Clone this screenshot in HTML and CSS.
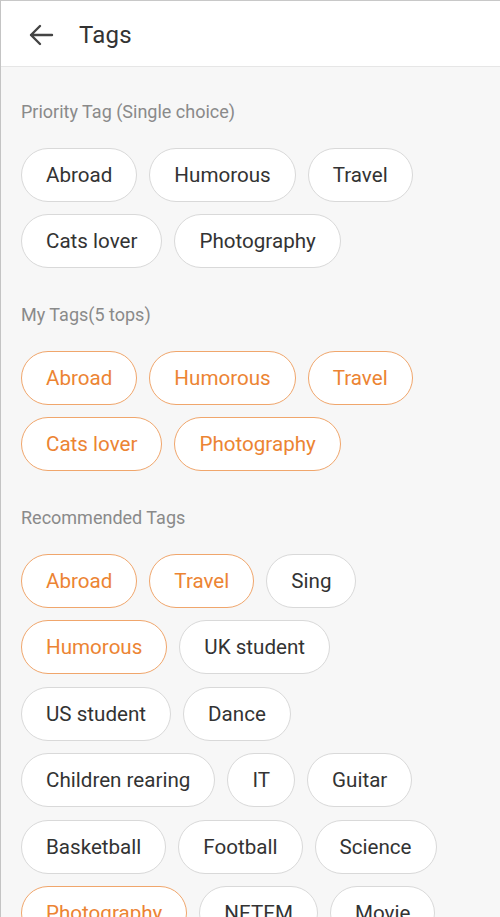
FILE: index.html
```html
<!DOCTYPE html>
<html>
<head>
<meta charset="utf-8">
<link rel="stylesheet" href="styles.css">
</head>
<body>
<div class="page">
  <header class="topbar">
    <svg class="back" width="26" height="22" viewBox="0 0 26 22"><path d="M24 11H3M12 2L3 11L12 20" fill="none" stroke="#444" stroke-width="2.4" stroke-linecap="round" stroke-linejoin="round"/></svg>
    <span class="title">Tags</span>
  </header>
  <main class="content">
    <section class="section">
      <div class="label">Priority Tag (Single choice)</div>
      <div class="chips">
        <span class="chip">Abroad</span>
        <span class="chip">Humorous</span>
        <span class="chip">Travel</span>
        <span class="chip">Cats lover</span>
        <span class="chip">Photography</span>
      </div>
    </section>
    <section class="section">
      <div class="label">My Tags(5 tops)</div>
      <div class="chips">
        <span class="chip on">Abroad</span>
        <span class="chip on">Humorous</span>
        <span class="chip on">Travel</span>
        <span class="chip on">Cats lover</span>
        <span class="chip on">Photography</span>
      </div>
    </section>
    <section class="section">
      <div class="label">Recommended Tags</div>
      <div class="chips">
        <span class="chip on">Abroad</span>
        <span class="chip on">Travel</span>
        <span class="chip">Sing</span>
        <span class="chip on">Humorous</span>
        <span class="chip">UK student</span>
        <span class="chip">US student</span>
        <span class="chip">Dance</span>
        <span class="chip">Children rearing</span>
        <span class="chip">IT</span>
        <span class="chip">Guitar</span>
        <span class="chip">Basketball</span>
        <span class="chip">Football</span>
        <span class="chip">Science</span>
        <span class="chip on">Photography</span>
        <span class="chip">NETEM</span>
        <span class="chip">Movie</span>
      </div>
    </section>
  </main>
</div>
</body>
</html>
```
FILE: styles.css
```css
html, body {
  margin: 0;
  padding: 0;
  height: 100%;
  overflow: hidden;
}
body {
  font-family: Roboto, "Noto Sans", sans-serif;
  background: #f7f7f7;
}
.page {
  min-height: 100%;
  border-left: 1px solid #c4c4c4;
  border-top: 1px solid #c8c8c8;
  box-sizing: border-box;
  background: #f7f7f7;
}
.topbar {
  height: 66px;
  background: #ffffff;
  border-bottom: 1px solid #e6e6e6;
  display: flex;
  align-items: center;
  box-sizing: border-box;
  padding-left: 27px;
  padding-top: 2px;
}
.back {
  display: block;
}
.title {
  margin-left: 25px;
  font-size: 24px;
  color: #333;
  letter-spacing: 0.2px;
}
.content {
  padding: 33px 0 0 20px;
}
.section {
  margin-bottom: 35px;
}
.label {
  font-size: 18px;
  line-height: 24px;
  color: #8a8a8a;
  margin-bottom: 23.5px;
}
.chips {
  display: flex;
  flex-wrap: wrap;
  column-gap: 12px;
  row-gap: 12.5px;
  padding-right: 40px;
}
.chip {
  height: 54px;
  box-sizing: border-box;
  border: 1px solid #d9d9d9;
  border-radius: 27px;
  background: #fff;
  padding: 0 24px;
  display: flex;
  align-items: center;
  font-size: 20.6px;
  color: #333;
}
.chip.on {
  border-color: #f0a66c;
  color: #ec8433;
}
```
